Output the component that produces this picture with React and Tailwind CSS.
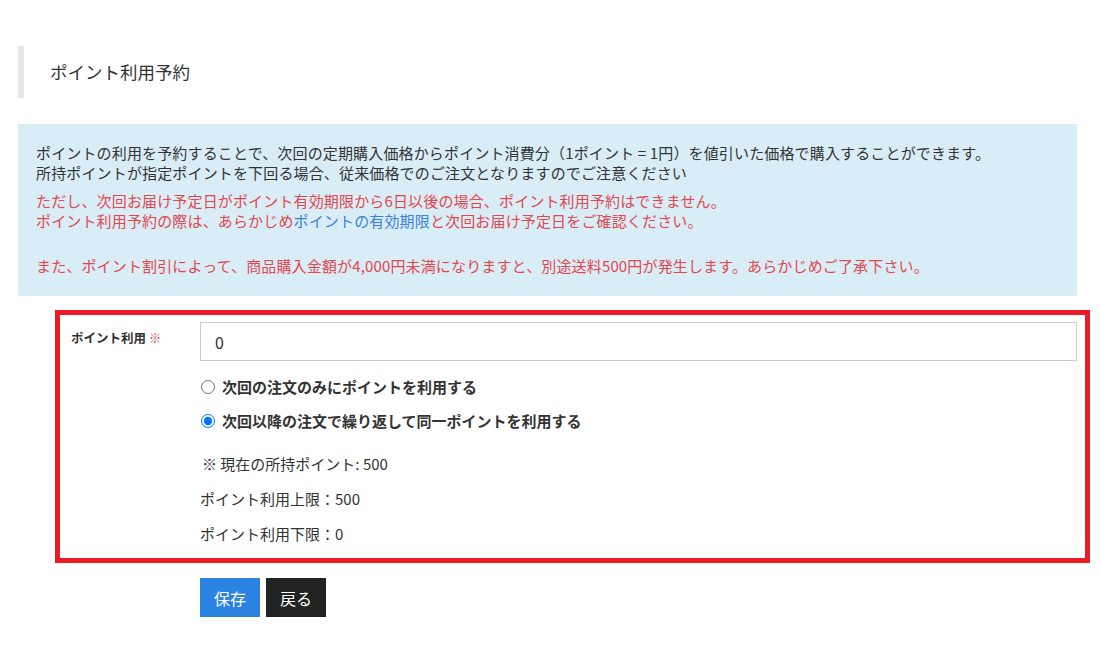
import { useState } from 'react';

export default function App() {
  const [points, setPoints] = useState('0');
  const [mode, setMode] = useState('repeat');

  const font = { fontFamily: '"Noto Sans CJK JP", "Noto Sans", sans-serif' };

  return (
    <div className="w-[1100px] min-h-[660px] bg-white text-[#333] pt-[46px] pl-[18px]" style={font}>

      {/* 見出し */}
      <div className="h-[52px] border-l-[6px] border-[#e6e6e6] pl-[26px] flex items-center">
        <h1 className="text-[17.5px] font-normal">ポイント利用予約</h1>
      </div>

      {/* 注意書き */}
      <div className="mt-[26px] w-[1059px] bg-[#d9edf7] pt-[19px] pb-[20px] px-[18px] text-[15px] leading-[20px] tracking-[0.15px]">
        <p>ポイントの利用を予約することで、次回の定期購入価格からポイント消費分（1ポイント = 1円）を値引いた価格で購入することができます。</p>
        <p>所持ポイントが指定ポイントを下回る場合、従来価格でのご注文となりますのでご注意ください</p>
        <p className="mt-[8px] text-[#e4464e]">ただし、次回お届け予定日がポイント有効期限から6日以後の場合、ポイント利用予約はできません。</p>
        <p className="text-[#e4464e]">
          ポイント利用予約の際は、あらかじめ<span className="text-[#3b82e0]">ポイントの有効期限</span>と次回お届け予定日をご確認ください。
        </p>
        <p className="mt-[25px] text-[#e4464e]">また、ポイント割引によって、商品購入金額が4,000円未満になりますと、別途送料500円が発生します。あらかじめご了承下さい。</p>
      </div>

      {/* フォーム（赤枠付き） */}
      <div className="relative mt-[14px] ml-[37px] w-[1035px] pt-[12px] pb-[19px] pl-[16px] pr-[13px]">
        <div className="flex">
          <div className="w-[129px] pt-[7px] text-[12.5px] font-bold leading-[18px]">
            ポイント利用 <span className="text-[#e4464e] font-normal">※</span>
          </div>
          <div className="flex-1">
            <input
              type="text"
              value={points}
              onChange={(e) => setPoints(e.target.value)}
              className="w-full h-[39px] border border-[#cccccc] px-[14px] text-[16px] text-[#333] outline-none"
            />

            <label className="mt-[16px] flex items-center gap-[7px] text-[15px] font-bold leading-[20px] cursor-pointer">
              <input
                type="radio"
                name="mode"
                checked={mode === 'once'}
                onChange={() => setMode('once')}
                className="w-[14px] h-[14px] m-0 ml-[1px]"
              />
              次回の注文のみにポイントを利用する
            </label>
            <label className="mt-[14px] flex items-center gap-[7px] text-[15px] font-bold leading-[20px] cursor-pointer">
              <input
                type="radio"
                name="mode"
                checked={mode === 'repeat'}
                onChange={() => setMode('repeat')}
                className="w-[14px] h-[14px] m-0 ml-[1px]"
              />
              次回以降の注文で繰り返して同一ポイントを利用する
            </label>

            <div className="mt-[23px] text-[15px] leading-[20px] space-y-[15px]">
              <p className="pl-[2px]">※ 現在の所持ポイント: 500</p>
              <p>ポイント利用上限：500</p>
              <p>ポイント利用下限：0</p>
            </div>
          </div>
        </div>

        {/* 注釈の赤枠 */}
        <div className="absolute inset-0 border-[5px] border-[#ed1c24] pointer-events-none" />
      </div>

      {/* ボタン */}
      <div className="mt-[15px] ml-[182px] flex gap-[6px]">
        <button className="w-[60px] h-[39px] bg-[#2a82e2] text-white text-[16px]">保存</button>
        <button className="w-[60px] h-[39px] bg-[#222222] text-white text-[16px]">戻る</button>
      </div>
    </div>
  );
}
